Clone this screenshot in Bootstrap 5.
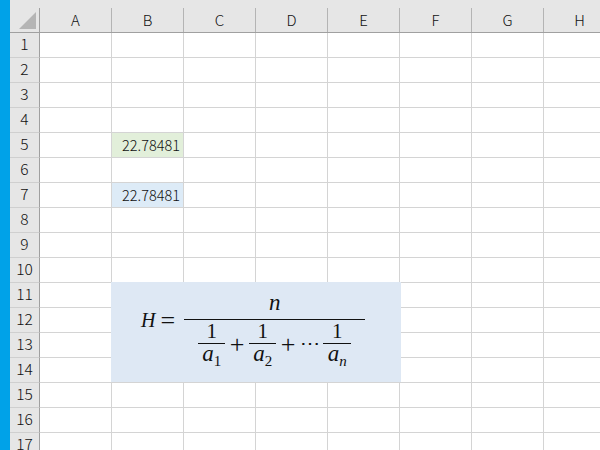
<!DOCTYPE html>
<html lang="en">
<head>
<meta charset="utf-8">
<title>Sheet</title>
<link href="https://cdn.jsdelivr.net/npm/bootstrap@5.3.0/dist/css/bootstrap.min.css" rel="stylesheet">
<style>
html, body { width: 600px; height: 450px; overflow: hidden; background: #fff; }
.app-frame { width: 600px; height: 450px; overflow: hidden; position: relative; }
.win-edge { width: 10px; flex: 0 0 10px; background: #00a2e8; }
.sheet-tbl { table-layout: fixed; width: 606px; flex: 0 0 606px; border-collapse: separate; border-spacing: 0; font-family: "Noto Sans CJK JP", "Noto Sans", sans-serif; color: #333; }
.sheet-tbl col.hd { width: 30px; }
.sheet-tbl col.cl { width: 72px; }
.sheet-tbl tr { height: 25px; }
.sheet-tbl thead tr { height: 33px; }
.sheet-tbl th, .sheet-tbl td { padding: 0; border-right: 1px solid #d4d4d4; border-bottom: 1px solid #d4d4d4; line-height: 21px; overflow: hidden; }
.sheet-tbl thead th { background: #e6e6e6; border-right: 0; border-bottom: 1px solid #a0a0a0; padding-top: 8px; font-weight: 300; font-size: 15px; text-align: center; color: #111; }
.col-cap { height: 24px; line-height: 23px; border-right: 1px solid #b4b4b4; }
.corner-cap { height: 24px; border-right: 1px solid #a0a0a0; display: flex; align-items: flex-start; }
.sheet-tbl tbody th { background: #e6e6e6; border-right: 1px solid #a0a0a0; border-bottom: 1px solid #cfcfcf; font-weight: 300; font-size: 15.5px; text-align: center; color: #111; padding-bottom: 3px; }
.sheet-tbl tbody td.val { text-align: right; font-size: 14.5px; font-weight: 300; color: #111; padding-right: 3px; padding-bottom: 2px; }
.val-green { background: #e2efda; }
.val-blue { background: #ddebf7; }
.formula-box { position: absolute; left: 111px; top: 282px; width: 290px; height: 100px; background: #dee8f4; font-family: "Liberation Serif", serif; color: #111; font-size: 21px; line-height: 1; padding-left: 30px; }
.m-i { font-style: italic; font-size: 23px; }
.m-h { font-size: 20px; margin-top: 28px; }
.m-eq { font-size: 26px; margin: 26px 9px 0 5px; }
.m-main { width: 181px; }
.m-num { height: 38px; border-bottom: 1px solid #111; padding-bottom: 5px; }
.m-den { padding-top: 1px; height: 61px; padding-left: 14px; }
.m-frac { width: 27px; }
.m-frac.m-last { width: 28px; }
.m-top { height: 23px; border-bottom: 1px solid #111; padding-bottom: 1px; }
.m-bot { margin-top: -2px; white-space: nowrap; }
.m-sub { font-size: 15px; position: relative; top: 5px; }
.m-op { width: 24px; font-size: 26px; padding-top: 11px; }
.m-dots { width: 23px; font-size: 20px; padding-top: 12px; padding-right: 4px; }
</style>
</head>
<body>
<div class="app-frame d-flex">
  <div class="win-edge"></div>
  <table class="sheet-tbl">
    <colgroup><col class="hd"><col class="cl"><col class="cl"><col class="cl"><col class="cl"><col class="cl"><col class="cl"><col class="cl"><col class="cl"></colgroup>
    <thead>
      <tr>
        <th><div class="corner-cap"><svg width="29" height="24" viewBox="0 0 29 24"><polygon points="9,21 26,21 26,4" fill="#b5b5b5"/></svg></div></th>
        <th><div class="col-cap">A</div></th><th><div class="col-cap">B</div></th><th><div class="col-cap">C</div></th><th><div class="col-cap">D</div></th><th><div class="col-cap">E</div></th><th><div class="col-cap">F</div></th><th><div class="col-cap">G</div></th><th><div class="col-cap">H</div></th>
      </tr>
    </thead>
    <tbody>
      <tr><th>1</th><td></td><td></td><td></td><td></td><td></td><td></td><td></td><td></td></tr>
      <tr><th>2</th><td></td><td></td><td></td><td></td><td></td><td></td><td></td><td></td></tr>
      <tr><th>3</th><td></td><td></td><td></td><td></td><td></td><td></td><td></td><td></td></tr>
      <tr><th>4</th><td></td><td></td><td></td><td></td><td></td><td></td><td></td><td></td></tr>
      <tr><th>5</th><td></td><td class="val val-green">22.78481</td><td></td><td></td><td></td><td></td><td></td><td></td></tr>
      <tr><th>6</th><td></td><td></td><td></td><td></td><td></td><td></td><td></td><td></td></tr>
      <tr><th>7</th><td></td><td class="val val-blue">22.78481</td><td></td><td></td><td></td><td></td><td></td><td></td></tr>
      <tr><th>8</th><td></td><td></td><td></td><td></td><td></td><td></td><td></td><td></td></tr>
      <tr><th>9</th><td></td><td></td><td></td><td></td><td></td><td></td><td></td><td></td></tr>
      <tr><th>10</th><td></td><td></td><td></td><td></td><td></td><td></td><td></td><td></td></tr>
      <tr><th>11</th><td></td><td></td><td></td><td></td><td></td><td></td><td></td><td></td></tr>
      <tr><th>12</th><td></td><td></td><td></td><td></td><td></td><td></td><td></td><td></td></tr>
      <tr><th>13</th><td></td><td></td><td></td><td></td><td></td><td></td><td></td><td></td></tr>
      <tr><th>14</th><td></td><td></td><td></td><td></td><td></td><td></td><td></td><td></td></tr>
      <tr><th>15</th><td></td><td></td><td></td><td></td><td></td><td></td><td></td><td></td></tr>
      <tr><th>16</th><td></td><td></td><td></td><td></td><td></td><td></td><td></td><td></td></tr>
      <tr><th>17</th><td></td><td></td><td></td><td></td><td></td><td></td><td></td><td></td></tr>
    </tbody>
  </table>
  <div class="formula-box d-flex align-items-start">
    <span class="m-i m-h">H</span><span class="m-eq">=</span>
    <div class="m-main">
      <div class="m-num d-flex align-items-end justify-content-center m-i">n</div>
      <div class="m-den d-flex align-items-start">
        <div class="m-frac text-center"><div class="m-top d-flex align-items-end justify-content-center">1</div><div class="m-bot"><span class="m-i">a</span><span class="m-sub">1</span></div></div>
        <div class="m-op text-center">+</div>
        <div class="m-frac text-center"><div class="m-top d-flex align-items-end justify-content-center">1</div><div class="m-bot"><span class="m-i">a</span><span class="m-sub">2</span></div></div>
        <div class="m-op text-center">+</div>
        <div class="m-dots text-center">⋯</div>
        <div class="m-frac m-last text-center"><div class="m-top d-flex align-items-end justify-content-center">1</div><div class="m-bot"><span class="m-i">a</span><span class="m-sub fst-italic">n</span></div></div>
      </div>
    </div>
  </div>
</div>
<script src="https://cdn.jsdelivr.net/npm/bootstrap@5.3.0/dist/js/bootstrap.bundle.min.js"></script>
</body>
</html>
